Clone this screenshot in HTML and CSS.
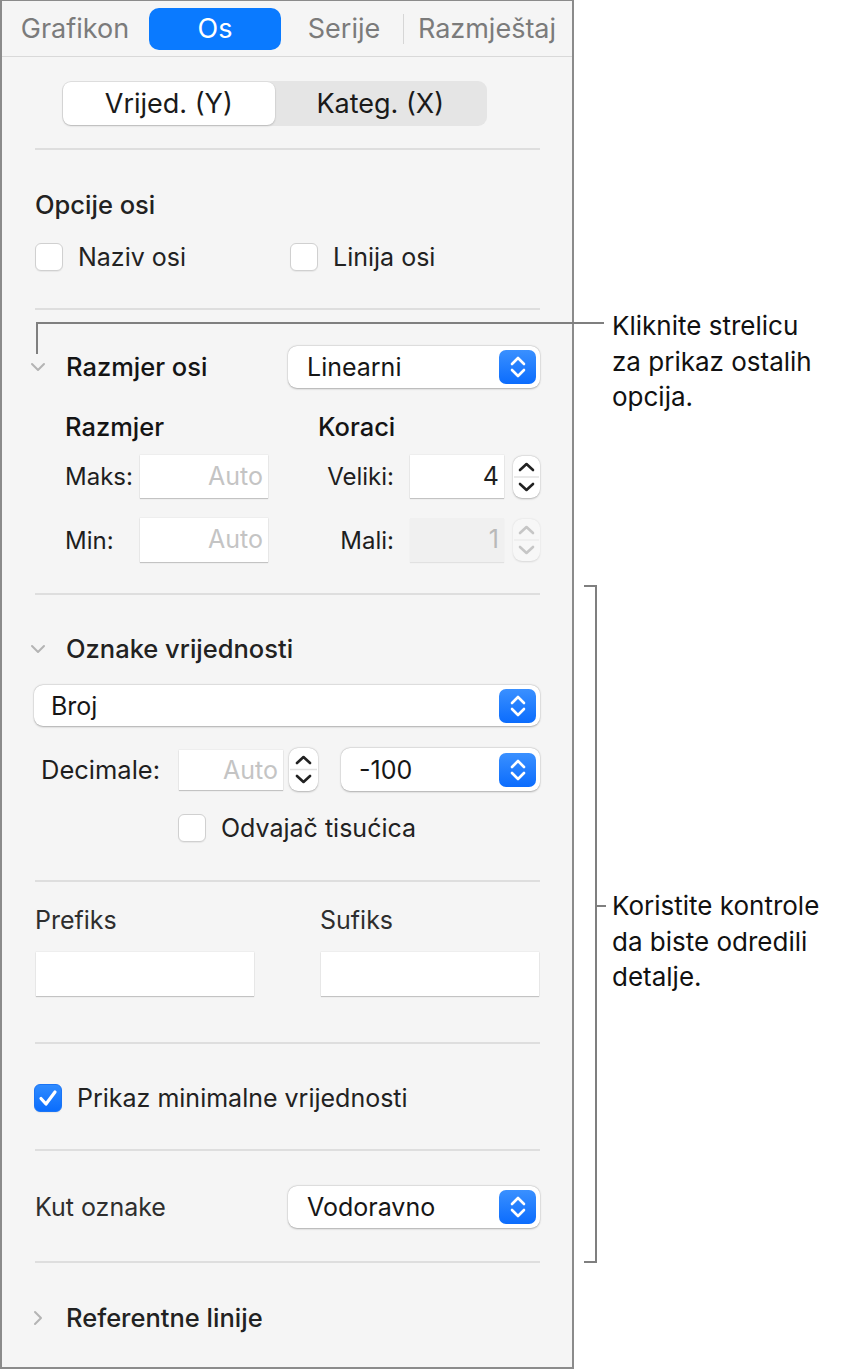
FILE: index.html
```html
<!DOCTYPE html>
<html lang="hr">
<head>
<meta charset="utf-8">
<title>Os</title>
<link rel="stylesheet" href="styles.css">
</head>
<body>
<div class="page">
  <div class="panel">
    <div class="tabs">
      <div class="tab t-graf">Grafikon</div>
      <div class="tab t-os active">Os</div>
      <div class="tab t-ser">Serije</div>
      <div class="tab-sep"></div>
      <div class="tab t-raz">Razmještaj</div>
    </div>
    <div class="content">
      <div class="seg">
        <div class="seg-item on">Vrijed. (Y)</div>
        <div class="seg-item">Kateg. (X)</div>
      </div>

      <div class="rule r-a"></div>
      <div class="title t-opcije">Opcije osi</div>
      <div class="check-row cr-opcije">
        <div class="check c-naziv"><span class="box"></span><span>Naziv osi</span></div>
        <div class="check"><span class="box"></span><span>Linija osi</span></div>
      </div>

      <div class="rule r-b"></div>
      <div class="disc-row dr-axis">
        <span class="chev">
          <svg width="16" height="10" viewBox="0 0 16 10"><path d="M2 2 L8 8 L14 2" fill="none" stroke="#b4b4b4" stroke-width="2" stroke-linecap="round" stroke-linejoin="round"/></svg>
        </span>
        <span class="title strong">Razmjer osi</span>
        <div class="select s-axis">
          <span class="sel-text">Linearni</span>
          <span class="sel-btn"><svg width="22" height="26" viewBox="0 0 22 26"><path d="M5 10 L11 4 L17 10 M5 16 L11 22 L17 16" fill="none" stroke="#fff" stroke-width="2.6" stroke-linecap="round" stroke-linejoin="round"/></svg></span>
        </div>
      </div>

      <div class="scale-head">
        <span class="title strong sh-left">Razmjer</span>
        <span class="title strong">Koraci</span>
      </div>
      <div class="scale-row sr-maks">
        <span class="lbl l-left">Maks:</span>
        <span class="field f-auto">Auto</span>
        <span class="lbl l-right">Veliki:</span>
        <span class="field f-step">4</span>
        <span class="stepper">
          <svg width="27" height="42" viewBox="0 0 27 42"><path d="M7 14 L13.5 8 L20 14 M7 28 L13.5 34 L20 28" fill="none" stroke="#222" stroke-width="2.6" stroke-linecap="round" stroke-linejoin="round"/><line x1="1" y1="21" x2="26" y2="21" stroke="#e2e2e2" stroke-width="1.5"/></svg>
        </span>
      </div>
      <div class="scale-row sr-min">
        <span class="lbl l-left">Min:</span>
        <span class="field f-auto">Auto</span>
        <span class="lbl l-right">Mali:</span>
        <span class="field f-step disabled">1</span>
        <span class="stepper faded">
          <svg width="27" height="42" viewBox="0 0 27 42"><path d="M7 14 L13.5 8 L20 14 M7 28 L13.5 34 L20 28" fill="none" stroke="#c6c6c6" stroke-width="2.6" stroke-linecap="round" stroke-linejoin="round"/><line x1="1" y1="21" x2="26" y2="21" stroke="#ececec" stroke-width="1.5"/></svg>
        </span>
      </div>

      <div class="rule r-c"></div>
      <div class="disc-row dr-oznake">
        <span class="chev">
          <svg width="16" height="10" viewBox="0 0 16 10"><path d="M2 2 L8 8 L14 2" fill="none" stroke="#b4b4b4" stroke-width="2" stroke-linecap="round" stroke-linejoin="round"/></svg>
        </span>
        <span class="title medium">Oznake vrijednosti</span>
      </div>
      <div class="select s-broj">
        <span class="sel-text">Broj</span>
        <span class="sel-btn"><svg width="22" height="26" viewBox="0 0 22 26"><path d="M5 10 L11 4 L17 10 M5 16 L11 22 L17 16" fill="none" stroke="#fff" stroke-width="2.6" stroke-linecap="round" stroke-linejoin="round"/></svg></span>
      </div>
      <div class="dec-row">
        <span class="lbl l-dec">Decimale:</span>
        <span class="field f-dec">Auto</span>
        <span class="stepper st-dec">
          <svg width="29" height="43" viewBox="0 0 29 43"><path d="M8 15 L14.5 9 L21 15 M8 28 L14.5 34 L21 28" fill="none" stroke="#222" stroke-width="2.6" stroke-linecap="round" stroke-linejoin="round"/><line x1="1" y1="21.5" x2="28" y2="21.5" stroke="#e2e2e2" stroke-width="1.5"/></svg>
        </span>
        <div class="select s-dec">
          <span class="sel-text">-100</span>
          <span class="sel-btn"><svg width="22" height="26" viewBox="0 0 22 26"><path d="M5 10 L11 4 L17 10 M5 16 L11 22 L17 16" fill="none" stroke="#fff" stroke-width="2.6" stroke-linecap="round" stroke-linejoin="round"/></svg></span>
        </div>
      </div>
      <div class="check-row cr-sep">
        <div class="check"><span class="box"></span><span>Odvajač tisućica</span></div>
      </div>

      <div class="rule r-d"></div>
      <div class="fix-head">
        <span class="plain fh-left">Prefiks</span>
        <span class="plain">Sufiks</span>
      </div>
      <div class="fix-row">
        <span class="field f-fix"></span>
        <span class="field f-fix"></span>
      </div>

      <div class="rule r-e"></div>
      <div class="check-row cr-min">
        <div class="check"><span class="box checked"><svg width="20" height="18" viewBox="0 0 20 18"><path d="M3 9.5 L8 15 L17 3" fill="none" stroke="#fff" stroke-width="3.2" stroke-linecap="round" stroke-linejoin="round"/></svg></span><span>Prikaz minimalne vrijednosti</span></div>
      </div>

      <div class="rule r-f"></div>
      <div class="kut-row">
        <span class="plain">Kut oznake</span>
        <div class="select s-kut">
          <span class="sel-text">Vodoravno</span>
          <span class="sel-btn"><svg width="22" height="26" viewBox="0 0 22 26"><path d="M5 10 L11 4 L17 10 M5 16 L11 22 L17 16" fill="none" stroke="#fff" stroke-width="2.6" stroke-linecap="round" stroke-linejoin="round"/></svg></span>
        </div>
      </div>

      <div class="rule r-g"></div>
      <div class="disc-row dr-ref">
        <span class="chev chev-r">
          <svg width="10" height="16" viewBox="0 0 10 16"><path d="M2 2 L8 8 L2 14" fill="none" stroke="#b4b4b4" stroke-width="2" stroke-linecap="round" stroke-linejoin="round"/></svg>
        </span>
        <span class="title medium">Referentne linije</span>
      </div>
    </div>
  </div>

  <svg class="callout-lines" width="854" height="1370" viewBox="0 0 854 1370">
    <path d="M37 354 L37 323 L604 323" fill="none" stroke="#7f7f7f" stroke-width="2"/>
    <path d="M584 586 L596 586 L596 1262 L584 1262 M596 906 L606 906" fill="none" stroke="#7f7f7f" stroke-width="2"/>
  </svg>
  <div class="note n-top">Kliknite strelicu<br>za prikaz ostalih<br>opcija.</div>
  <div class="note n-mid">Koristite kontrole<br>da biste odredili<br>detalje.</div>
</div>
</body>
</html>
```
FILE: styles.css
```css
* { box-sizing: border-box; }
html, body { margin: 0; padding: 0; background: #fff; }
body { font-family: Inter, "Noto Sans", sans-serif; color: #1e1e1e; }

.page { position: relative; width: 854px; height: 1370px; }

.panel {
  width: 574px;
  height: 1369px;
  background: #f5f5f5;
  border: 2px solid #8b8b8b;
  border-top-width: 1px;
}

/* tabs */
.tabs {
  display: flex;
  align-items: center;
  height: 56px;
  padding: 6px 0 6px 8px;
  border-bottom: 1px solid #d9d9d9;
}
.tab {
  height: 42px;
  line-height: 42px;
  text-align: center;
  font-size: 27px;
  color: #7b7b7b;
  white-space: nowrap;
}
.t-graf { width: 130px; margin-right: 9px; }
.t-os { width: 132px; }
.t-ser { width: 110px; margin-left: 8px; }
.t-raz { width: 150px; margin-left: 8px; }
.tab.active { background: #0a7aff; color: #fff; border-radius: 10px; }
.tab-sep { width: 1px; height: 30px; background: #d6d6d6; margin-left: 4px; }

.content { padding: 0 32px 0 33px; }

/* segmented */
.seg {
  display: flex;
  width: 425px;
  height: 45px;
  margin: 24px 0 0 27px;
  padding: 1px;
  background: #e5e5e5;
  border-radius: 9px;
}
.seg-item {
  flex: 1;
  text-align: center;
  line-height: 43px;
  font-size: 27px;
  color: #1a1a1a;
}
.seg-item.on {
  background: #fff;
  border-radius: 8px;
  box-shadow: 0 1px 2px rgba(0,0,0,0.18), 0 0 0 0.5px rgba(0,0,0,0.05);
}

.rule { height: 2px; background: #dedede; }
.r-a { margin-top: 22px; }
.r-b { margin-top: 37px; }
.r-c { margin-top: 31px; }
.r-d { margin-top: 38px; }
.r-e { margin-top: 46px; }
.r-f { margin-top: 37px; }
.r-g { margin-top: 33px; }

.title { font-size: 25.5px; line-height: 30px; font-weight: 500; color: #222; white-space: nowrap; }
.title.strong { color: #141414; }
.title.medium { color: #222; }
.t-opcije { margin-top: 40px; }

.plain { font-size: 25px; line-height: 30px; color: #2e2e2e; }

/* checkboxes */
.check-row { display: flex; height: 29px; align-items: center; }
.cr-opcije { margin-top: 23px; height: 28px; }
.cr-sep { margin-top: 22px; padding-left: 143px; }
.cr-min { margin-top: 39px; margin-left: -1px; }
.check { display: flex; align-items: center; font-size: 25px; color: #222; white-space: nowrap; }
.c-naziv { width: 255px; }
.box {
  width: 28px; height: 28px;
  margin-right: 15px;
  background: #fff;
  border: 1px solid #d0d0d0;
  border-radius: 6px;
  box-shadow: 0 1px 1px rgba(0,0,0,0.06);
  display: flex; align-items: center; justify-content: center;
  flex: none;
}
.box.checked { background: linear-gradient(#2f8bff, #0a6dfd); border-color: #1a74f5; }

/* disclosure rows */
.disc-row { display: flex; align-items: center; }
.chev { width: 36px; margin-left: -5px; display: flex; align-items: center; flex: none; }
.chev-r { padding-left: 3px; }
.dr-axis { margin-top: 36px; height: 42px; }
.dr-oznake { margin-top: 39px; height: 30px; }
.dr-ref { margin-top: 40px; height: 30px; }

/* select popups */
.select {
  display: flex;
  align-items: center;
  justify-content: space-between;
  background: #fff;
  border-radius: 9px;
  box-shadow: 0 0.5px 2px rgba(0,0,0,0.28), 0 0 0 0.5px rgba(0,0,0,0.06);
  padding: 0 4px 0 19px;
  font-size: 25px;
  color: #161616;
  flex: none;
}
.sel-btn {
  width: 37px; height: 34px;
  border-radius: 7px;
  background: linear-gradient(#3a90ff, #0b6cfd);
  display: flex; align-items: center; justify-content: center;
}
.s-axis { width: 252px; height: 42px; margin-left: auto; }
.s-broj { width: 506px; height: 41px; margin: 21px 0 0 -1px; padding-left: 17px; }
.s-dec { width: 199px; height: 43px; margin-left: 23px; padding-left: 18px; }
.s-kut { width: 252px; height: 42px; margin-left: auto; }

/* scale block */
.scale-head { display: flex; margin-top: 24px; padding-left: 30px; }
.sh-left { width: 253px; }
.scale-row { display: flex; align-items: center; padding-left: 30px; }
.sr-maks { margin-top: 13px; height: 43px; }
.sr-min { margin-top: 20px; height: 44px; }
.lbl { font-size: 24px; color: #1e1e1e; white-space: nowrap; flex: none; }
.l-left { width: 75px; }
.l-right { width: 126px; text-align: right; margin-right: 16px; }
.field {
  display: block;
  flex: none;
  height: 100%;
  background: #fff;
  box-shadow: 0 1px 1px rgba(0,0,0,0.18), 0 0 0 0.5px rgba(0,0,0,0.06);
  font-size: 25px;
  text-align: right;
  padding-right: 5px;
  color: #1e1e1e;
}
.scale-row .field { line-height: 43px; }
.f-auto { width: 128px; color: #c4c4c4; }
.f-step { width: 94px; }
.f-step.disabled { background: #f0f0f0; color: #b9b9b9; box-shadow: 0 1px 1px rgba(0,0,0,0.08); }
.stepper {
  width: 27px; height: 42px;
  margin-left: 9px;
  background: #fff;
  border-radius: 9px;
  box-shadow: 0 0.5px 2px rgba(0,0,0,0.25), 0 0 0 0.5px rgba(0,0,0,0.05);
  display: block;
  flex: none;
}
.stepper svg { display: block; }
.stepper.faded { background: #f7f7f7; box-shadow: 0 0.5px 2px rgba(0,0,0,0.12); }

/* decimals */
.dec-row { display: flex; align-items: center; margin-top: 22px; height: 43px; padding-left: 6px; }
.l-dec { width: 138px; font-size: 25.5px; }
.f-dec { width: 104px; height: 40px; line-height: 40px; color: #c4c4c4; }
.st-dec { width: 29px; height: 43px; margin-left: 6px; }

/* prefix / suffix */
.fix-head { display: flex; margin-top: 23px; }
.fh-left { width: 285px; }
.fix-row { display: flex; gap: 67px; margin-top: 17px; height: 44px; padding-left: 1px; }
.f-fix { width: 218px; }

/* kut */
.kut-row { display: flex; align-items: center; margin-top: 35px; height: 42px; }

/* annotations */
.callout-lines { position: absolute; left: 0; top: 0; pointer-events: none; }
.note {
  position: absolute;
  left: 612px;
  font-family: Inter, "Noto Sans", sans-serif;
  font-size: 26px;
  line-height: 35.5px;
  color: #111;
  white-space: nowrap;
}
.n-top { top: 308px; }
.n-mid { top: 888px; }
```
